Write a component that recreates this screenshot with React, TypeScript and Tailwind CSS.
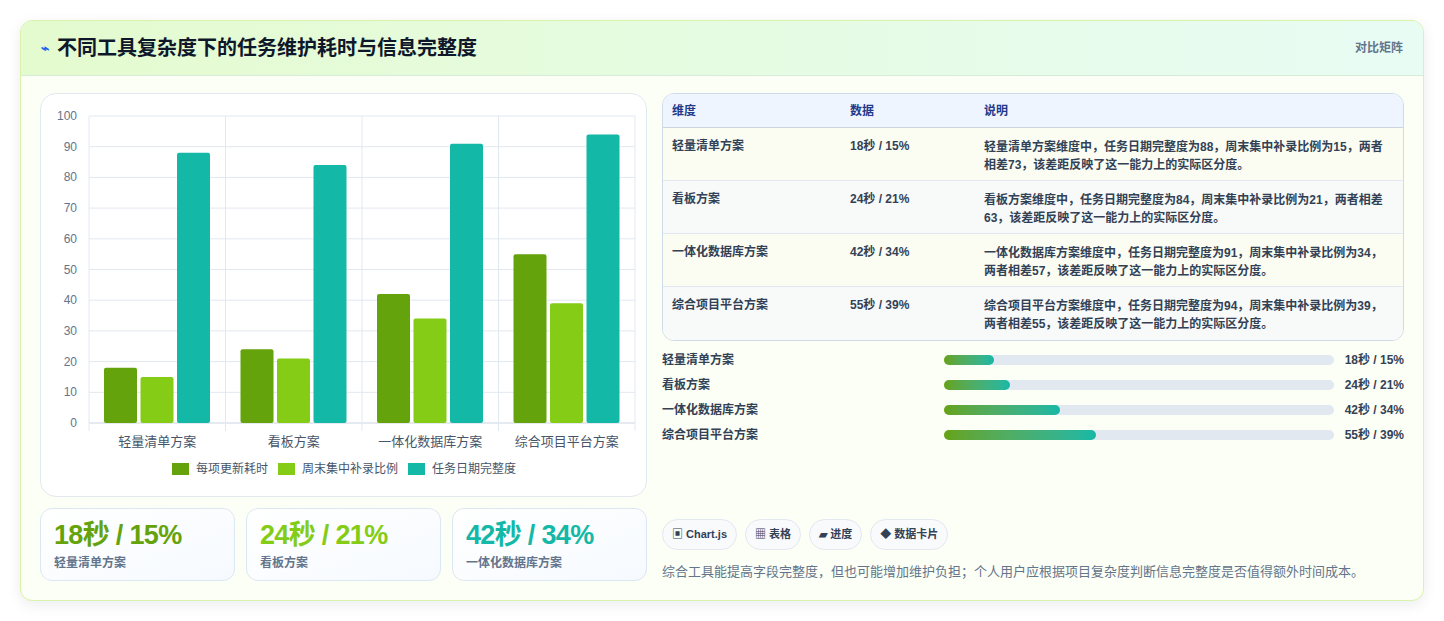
import React from 'react';

const groups = [
  { name: '轻量清单方案', a: 18, b: 15, c: 88, v: '18秒 / 15%' },
  { name: '看板方案', a: 24, b: 21, c: 84, v: '24秒 / 21%' },
  { name: '一体化数据库方案', a: 42, b: 34, c: 91, v: '42秒 / 34%' },
  { name: '综合项目平台方案', a: 55, b: 39, c: 94, v: '55秒 / 39%' },
];

const notes = [
  '轻量清单方案维度中，任务日期完整度为88，周末集中补录比例为15，两者相差73，该差距反映了这一能力上的实际区分度。',
  '看板方案维度中，任务日期完整度为84，周末集中补录比例为21，两者相差63，该差距反映了这一能力上的实际区分度。',
  '一体化数据库方案维度中，任务日期完整度为91，周末集中补录比例为34，两者相差57，该差距反映了这一能力上的实际区分度。',
  '综合项目平台方案维度中，任务日期完整度为94，周末集中补录比例为39，两者相差55，该差距反映了这一能力上的实际区分度。',
];

function Chart() {
  // plot area inside card: x 48..594, y 22..329 (card origin at 40,93)
  const x0 = 48, x1 = 594, yTop = 22, yBot = 329;
  const h = yBot - yTop;
  const gw = (x1 - x0) / 4;
  const y = (v: number) => yBot - (v / 100) * h;
  return (
    <svg width="604" height="401" className="block">
      {Array.from({ length: 11 }).map((_, i) => {
        const yy = y(i * 10);
        return (
          <g key={i}>
            <line x1={x0} x2={x1} y1={yy} y2={yy} stroke={i === 0 ? '#cbd5e1' : '#e2e8f0'} />
            <text x={36} y={yy + 4} textAnchor="end" fontSize="12" fill="#64748b">{i * 10}</text>
          </g>
        );
      })}
      {[0, 1, 2, 3, 4].map((i) => (
        <line key={i} x1={x0 + i * gw} x2={x0 + i * gw} y1={yTop} y2={yBot + 8} stroke="#e2e8f0" />
      ))}
      {groups.map((g, i) => {
        const gx = x0 + i * gw + 15;
        const bars = [
          { v: g.a, c: '#65a30d' },
          { v: g.b, c: '#84cc16' },
          { v: g.c, c: '#14b8a6' },
        ];
        return (
          <g key={g.name}>
            {bars.map((b, j) => (
              <rect key={j} x={gx + j * 36.5} y={y(b.v)} width={33} height={yBot - y(b.v)} rx={2} fill={b.c} />
            ))}
            <text x={x0 + i * gw + gw / 2} y={352} textAnchor="middle" fontSize="13" fill="#475569">{g.name}</text>
          </g>
        );
      })}
      {[
        { x: 131, c: '#65a30d', t: '每项更新耗时' },
        { x: 237, c: '#84cc16', t: '周末集中补录比例' },
        { x: 367, c: '#14b8a6', t: '任务日期完整度' },
      ].map((l) => (
        <g key={l.t}>
          <rect x={l.x} y={369} width={17} height={12} fill={l.c} />
          <text x={l.x + 24} y={379} fontSize="12" fill="#475569">{l.t}</text>
        </g>
      ))}
    </svg>
  );
}

export default function App() {
  return (
    <div
      className="min-h-[621px] bg-white px-5 pt-5 pb-5"
      style={{ fontFamily: '"Liberation Sans", "Noto Sans CJK SC", sans-serif' }}
    >
      <div className="overflow-hidden rounded-xl border border-[#d9f3a8] bg-[#fbfff5] shadow-[0_4px_14px_rgba(15,23,42,0.08)]">
        <div className="flex h-[55px] items-center justify-between border-b border-[#d6ecd9] bg-gradient-to-r from-[#e4fbcf] to-[#e8fcf4] px-5">
          <h1 className="flex items-center gap-2 text-xl font-bold text-[#0f172a]">
            <span className="text-sm text-[#2563eb]">⌁</span>
            不同工具复杂度下的任务维护耗时与信息完整度
          </h1>
          <span className="text-xs font-bold text-[#64748b]">对比矩阵</span>
        </div>

        <div className="flex gap-[15px] px-[19px] pt-[17px] pb-[19px]">
          <div className="flex w-[607px] shrink-0 flex-col gap-[11px]">
            <div className="h-[404px] rounded-2xl border border-[#e2e8f0] bg-white">
              <Chart />
            </div>
            <div className="grid grid-cols-3 gap-[11px]">
              {groups.slice(0, 3).map((g, i) => (
                <div key={g.name} className="h-[73px] rounded-xl border border-[#dbe7f3] bg-gradient-to-br from-white to-[#f6faff] px-[13px] pt-[10px]">
                  <div
                    className={
                      'text-[27px] leading-[32px] font-bold tracking-tight ' +
                      (i === 0 ? 'text-[#65a30d]' : i === 1 ? 'text-[#84cc16]' : 'text-[#14b8a6]')
                    }
                  >
                    {g.v}
                  </div>
                  <div className="mt-1 text-xs font-bold text-[#64748b]">{g.name}</div>
                </div>
              ))}
            </div>
          </div>

          <div className="flex flex-1 flex-col">
            <div className="overflow-hidden rounded-xl border border-[#cfdbe8] bg-white">
              <div className="grid h-[34px] grid-cols-[178px_134px_1fr] items-center border-b border-[#cbd5e1] bg-[#eef5ff] px-[9px] text-xs font-bold text-[#1e3a8a]">
                <span>维度</span>
                <span>数据</span>
                <span>说明</span>
              </div>
              {groups.map((g, i) => (
                <div
                  key={g.name}
                  className={
                    'grid h-[53px] grid-cols-[178px_134px_1fr] border-b border-[#e2e8f0] px-[9px] pt-[10px] text-xs font-bold text-[#334155] last:border-b-0 ' +
                    (i % 2 === 0 ? 'bg-[#fbfdf3]' : 'bg-[#f7faf9]')
                  }
                >
                  <span>{g.name}</span>
                  <span>{g.v}</span>
                  <span className="leading-[18px]">{notes[i]}</span>
                </div>
              ))}
            </div>

            <div className="mt-[10px] flex flex-col gap-[7px]">
              {groups.map((g) => (
                <div key={g.name} className="flex h-[18px] items-center text-xs font-bold text-[#334155]">
                  <span className="w-[282px]">{g.name}</span>
                  <div className="h-[10px] w-[390px] rounded-full bg-[#e2e8f0]">
                    <div
                      className="h-full rounded-full bg-gradient-to-r from-[#65a30d] to-[#14b8a6]"
                      style={{ width: `${(g.a / 55) * 39 * (390 / 100) * (100 / 390)}%` }}
                    />
                  </div>
                  <span className="ml-auto">{g.v}</span>
                </div>
              ))}
            </div>

            <div className="mt-auto flex gap-2">
              {['▣ Chart.js', '▦ 表格', '▰ 进度', '◆ 数据卡片'].map((t) => (
                <span key={t} className="rounded-full border border-[#e2e8f0] bg-[#f8fafc] px-[9px] py-[6px] text-[11px] font-bold text-[#334155]">
                  {t}
                </span>
              ))}
            </div>
            <p className="mt-[12px] text-[13px] text-[#64748b]">
              综合工具能提高字段完整度，但也可能增加维护负担；个人用户应根据项目复杂度判断信息完整度是否值得额外时间成本。
            </p>
          </div>
        </div>
      </div>
    </div>
  );
}
